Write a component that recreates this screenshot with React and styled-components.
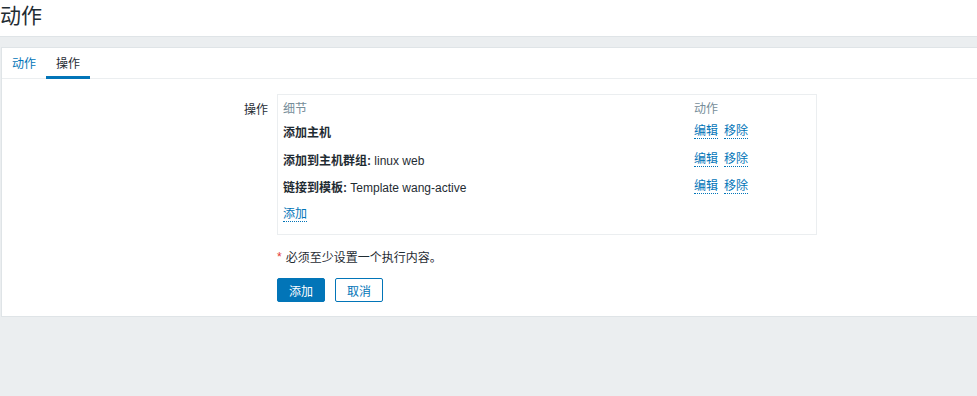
import React from "react";
import styled, { createGlobalStyle } from "styled-components";

const GlobalStyle = createGlobalStyle`
  html, body {
    margin: 0;
    padding: 0;
    height: 100%;
    overflow: hidden;
    background: #ebeef0;
    font-family: "Liberation Sans", Arial, "Noto Sans CJK SC", sans-serif;
    font-size: 12px;
    color: #1f2c33;
  }
`;

const Header = styled.header`
  height: 36px;
  background: #fff;
  border-bottom: 1px solid #dfe4e7;
  display: flex;
  align-items: center;
`;

const Title = styled.h1`
  margin: 0 0 8px 0;
  font-size: 21px;
  font-weight: normal;
  color: #1f2c33;
`;

const Container = styled.div`
  margin: 10px -20px 0 1px;
  background: #fff;
  border: 1px solid #dfe4e7;
  padding-bottom: 14px;
`;

const Tabs = styled.ul`
  display: flex;
  list-style: none;
  margin: 0;
  padding: 0;
  height: 30px;
  border-bottom: 1px solid #ebeef0;
`;

const Tab = styled.li`
  padding: 0 10px;
  display: flex;
  align-items: center;
  color: ${(p) => (p.$active ? "#1f2c33" : "#0275b8")};
  border-bottom: 3px solid ${(p) => (p.$active ? "#0275b8" : "transparent")};
  margin-bottom: -1px;
`;

const Form = styled.div`
  display: grid;
  grid-template-columns: 266px 1fr;
  column-gap: 9px;
  padding-top: 15px;
`;

const Label = styled.div`
  text-align: right;
  padding-top: 6px;
  color: #1f2c33;
`;

const OpsBox = styled.div`
  width: 528px;
  border: 1px solid #ebeef0;
  padding: 2px 5px 6px 5px;
`;

const OpsRow = styled.div`
  display: grid;
  grid-template-columns: 411px 1fr;
  align-items: center;
  height: ${(p) => (p.$head ? "21px" : "27.5px")};
`;

const HeadCell = styled.div`
  color: #768d99;
`;

const Strong = styled.b`
  font-weight: bold;
`;

const Links = styled.div`
  display: flex;
  gap: 6px;
`;

const Link = styled.span`
  color: #0275b8;
  border-bottom: 1px dotted #0275b8;
  line-height: 14px;
`;

const Note = styled.div`
  grid-column: 2;
  margin-top: 13px;
  display: flex;
  align-items: center;
  gap: 4px;
`;

const Star = styled.span`
  color: #e33734;
`;

const Buttons = styled.div`
  grid-column: 2;
  margin-top: 13px;
  display: flex;
  gap: 10px;
`;

const Button = styled.button`
  width: 48px;
  height: 24px;
  border-radius: 2px;
  font-family: inherit;
  font-size: 12px;
  padding: 0;
  cursor: pointer;
  border: 1px solid #0275b8;
  background: ${(p) => (p.$primary ? "#0275b8" : "#fff")};
  color: ${(p) => (p.$primary ? "#fff" : "#0275b8")};
`;

const operations = [
  { title: "添加主机", value: "" },
  { title: "添加到主机群组:", value: " linux web" },
  { title: "链接到模板:", value: " Template wang-active" },
];

const App = () => {
  return (
    <>
      <GlobalStyle />
      <Header>
        <Title>动作</Title>
      </Header>
      <Container>
        <Tabs>
          <Tab>动作</Tab>
          <Tab $active>操作</Tab>
        </Tabs>
        <Form>
          <Label>操作</Label>
          <OpsBox>
            <OpsRow $head>
              <HeadCell>细节</HeadCell>
              <HeadCell>动作</HeadCell>
            </OpsRow>
            {operations.map((op) => (
              <OpsRow key={op.title}>
                <div>
                  <Strong>{op.title}</Strong>
                  {op.value}
                </div>
                <Links>
                  <Link>编辑</Link>
                  <Link>移除</Link>
                </Links>
              </OpsRow>
            ))}
            <OpsRow>
              <div>
                <Link>添加</Link>
              </div>
            </OpsRow>
          </OpsBox>
          <Note>
            <Star>*</Star>
            <span>必须至少设置一个执行内容。</span>
          </Note>
          <Buttons>
            <Button $primary>添加</Button>
            <Button>取消</Button>
          </Buttons>
        </Form>
      </Container>
    </>
  );
};

export default App;
